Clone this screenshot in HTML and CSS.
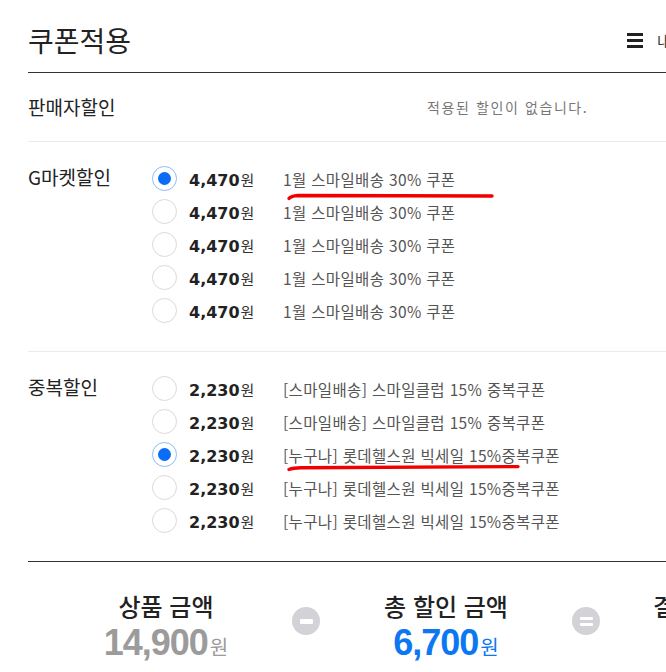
FILE: index.html
```html
<!DOCTYPE html>
<html lang="ko">
<head>
<meta charset="utf-8">
<title>쿠폰적용</title>
<link rel="stylesheet" href="styles.css">
</head>
<body>
<div class="page">
  <header class="header">
    <h1 class="title">쿠폰적용</h1>
    <div class="menu">
      <span class="burger"><i></i><i></i><i></i></span>
      <span class="menu-text">내 쿠폰함</span>
    </div>
  </header>

  <section class="seller">
    <div class="label">판매자할인</div>
    <div class="empty">적용된 할인이 없습니다.</div>
  </section>

  <section class="coupons">
    <div class="label">G마켓할인</div>
    <ul class="options">
      <li class="option">
        <span class="radio checked"></span>
        <span class="price"><span class="num">4,470</span><span class="won">원</span></span>
        <span class="desc">1월 스마일배송 30% 쿠폰</span>
        <svg class="mark mark-a" width="212" height="10" viewBox="0 0 212 10"><path d="M3 7.5 Q5 5 12 4.5 L206 5" fill="none" stroke="#f20000" stroke-width="3.4" stroke-linecap="round"/></svg>
      </li>
      <li class="option">
        <span class="radio"></span>
        <span class="price"><span class="num">4,470</span><span class="won">원</span></span>
        <span class="desc">1월 스마일배송 30% 쿠폰</span>
      </li>
      <li class="option">
        <span class="radio"></span>
        <span class="price"><span class="num">4,470</span><span class="won">원</span></span>
        <span class="desc">1월 스마일배송 30% 쿠폰</span>
      </li>
      <li class="option">
        <span class="radio"></span>
        <span class="price"><span class="num">4,470</span><span class="won">원</span></span>
        <span class="desc">1월 스마일배송 30% 쿠폰</span>
      </li>
      <li class="option">
        <span class="radio"></span>
        <span class="price"><span class="num">4,470</span><span class="won">원</span></span>
        <span class="desc">1월 스마일배송 30% 쿠폰</span>
      </li>
    </ul>
  </section>

  <section class="coupons last">
    <div class="label">중복할인</div>
    <ul class="options">
      <li class="option">
        <span class="radio"></span>
        <span class="price"><span class="num">2,230</span><span class="won">원</span></span>
        <span class="desc">[스마일배송] 스마일클럽 15% 중복쿠폰</span>
      </li>
      <li class="option">
        <span class="radio"></span>
        <span class="price"><span class="num">2,230</span><span class="won">원</span></span>
        <span class="desc">[스마일배송] 스마일클럽 15% 중복쿠폰</span>
      </li>
      <li class="option">
        <span class="radio checked"></span>
        <span class="price"><span class="num">2,230</span><span class="won">원</span></span>
        <span class="desc">[누구나] 롯데헬스원 빅세일 15%중복쿠폰</span>
        <svg class="mark mark-b" width="236" height="10" viewBox="0 0 236 10"><path d="M2 6.5 Q6 5 14 4.8 L231 3.6" fill="none" stroke="#f20000" stroke-width="3.4" stroke-linecap="round"/></svg>
      </li>
      <li class="option">
        <span class="radio"></span>
        <span class="price"><span class="num">2,230</span><span class="won">원</span></span>
        <span class="desc">[누구나] 롯데헬스원 빅세일 15%중복쿠폰</span>
      </li>
      <li class="option">
        <span class="radio"></span>
        <span class="price"><span class="num">2,230</span><span class="won">원</span></span>
        <span class="desc">[누구나] 롯데헬스원 빅세일 15%중복쿠폰</span>
      </li>
    </ul>
  </section>

  <section class="summary">
    <div class="sum-item">
      <div class="sum-title">상품 금액</div>
      <div class="sum-value gray"><span class="big">14,900</span><span class="won">원</span></div>
    </div>
    <span class="op minus"><i></i></span>
    <div class="sum-item">
      <div class="sum-title">총 할인 금액</div>
      <div class="sum-value blue"><span class="big">6,700</span><span class="won">원</span></div>
    </div>
    <span class="op equal"><i></i><i></i></span>
    <div class="sum-item">
      <div class="sum-title">결제 예정 금액</div>
      <div class="sum-value red"><span class="big">8,200</span><span class="won">원</span></div>
    </div>
  </section>
</div>
</body>
</html>
```

FILE: styles.css
```css
html, body {
  margin: 0;
  padding: 0;
  background: #fff;
}
body {
  overflow: hidden;
  font-family: "Noto Sans CJK KR", "Noto Sans", sans-serif;
  color: #222;
}
.page {
  width: 760px;
  margin-left: 28px;
}

/* header */
.header {
  display: grid;
  grid-template-columns: 599px auto;
  align-items: center;
  height: 73px;
  padding-top: 8px;
  box-sizing: border-box;
  border-bottom: 1px solid #333;
}
.title {
  margin: 0;
  font-size: 28px;
  font-weight: 400;
  line-height: 32px;
  color: #222;
}
.menu {
  display: flex;
  align-items: center;
  gap: 14px;
}
.burger {
  display: flex;
  flex-direction: column;
  gap: 3px;
  width: 16px;
}
.burger i {
  display: block;
  height: 3px;
  background: #222;
}
.menu-text {
  font-size: 15px;
  color: #333;
}

/* labels */
.label {
  width: 124px;
  flex-shrink: 0;
  font-size: 19px;
  line-height: 26px;
  color: #222;
}

/* seller */
.seller {
  display: flex;
  align-items: center;
  height: 69px;
  box-sizing: border-box;
  border-bottom: 1px solid #ebebeb;
}
.empty {
  padding-left: 275px;
  font-size: 14px;
  letter-spacing: 1.6px;
  color: #777;
}

/* coupon sections */
.coupons {
  display: flex;
  align-items: flex-start;
  padding: 20px 0 24px;
  border-bottom: 1px solid #ebebeb;
}
.coupons.last {
  border-bottom-color: #333;
}
.coupons .label {
  padding-top: 2px;
}
.options {
  list-style: none;
  margin: 0;
  padding: 0;
}
.option {
  position: relative;
  display: flex;
  align-items: center;
  height: 33px;
}
.radio {
  width: 25px;
  height: 25px;
  box-sizing: border-box;
  border-radius: 50%;
  border: 1.5px solid #dadada;
  background: #fff;
  flex-shrink: 0;
  display: flex;
  align-items: center;
  justify-content: center;
}
.radio.checked {
  border-color: #8dbcf6;
}
.radio.checked::after {
  content: "";
  width: 13px;
  height: 13px;
  border-radius: 50%;
  background: #0a6cf7;
}
.price {
  margin-left: 12px;
  width: 94px;
  flex-shrink: 0;
  white-space: nowrap;
}
.price .num {
  font-family: "DejaVu Sans", sans-serif;
  font-weight: 700;
  font-size: 16px;
  color: #222;
}
.price .won {
  margin-left: 1px;
  font-size: 15px;
  color: #333;
}
.desc {
  font-size: 15.5px;
  letter-spacing: 0.35px;
  color: #555;
  white-space: nowrap;
}
.mark {
  position: absolute;
  top: 29px;
  left: 134px;
}
.mark-b {
  top: 25px;
  left: 135px;
}

/* summary */
.summary {
  display: flex;
  align-items: center;
  padding: 27px 0 0 38px;
}
.sum-item {
  width: 200px;
  flex-shrink: 0;
  text-align: center;
  display: flex;
  flex-direction: column;
  gap: 1px;
}
.sum-title {
  font-size: 24px;
  font-weight: 500;
  line-height: 34px;
  color: #222;
  white-space: nowrap;
}
.sum-value {
  line-height: 38px;
  white-space: nowrap;
}
.sum-value .big {
  font-family: "Liberation Sans", sans-serif;
  font-weight: 700;
  font-size: 36px;
  letter-spacing: -1px;
}
.sum-value .won {
  margin-left: 2px;
  font-size: 20px;
}
.gray { color: #9b9b9b; }
.blue { color: #0d77f2; }
.red { color: #f03c32; }
.op {
  width: 28px;
  height: 28px;
  margin: 0 26px 14px;
  border-radius: 50%;
  background: #d2d2d7;
  flex-shrink: 0;
  display: flex;
  flex-direction: column;
  align-items: center;
  justify-content: center;
  gap: 3px;
}
.op i {
  display: block;
  width: 13px;
  background: #fff;
  border-radius: 1px;
}
.minus i { height: 5px; }
.equal i { height: 3px; }
```
